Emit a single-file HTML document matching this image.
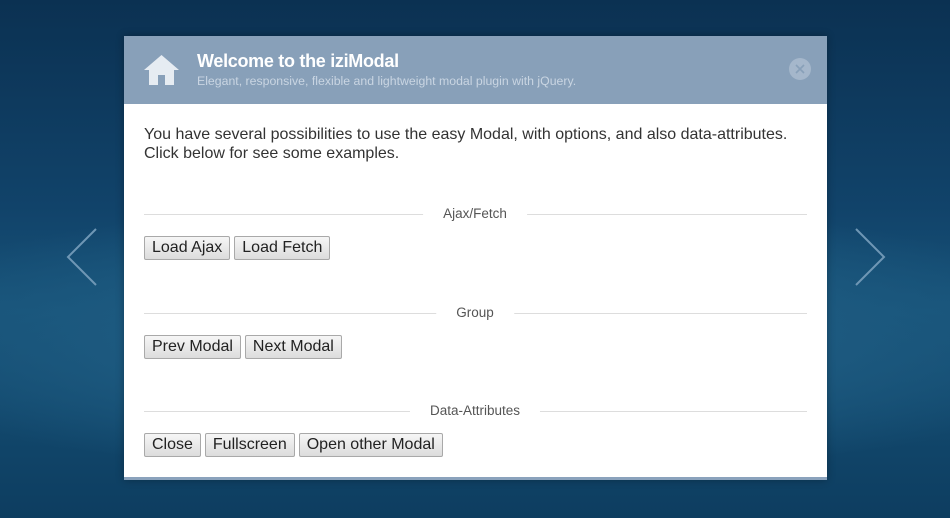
<!DOCTYPE html>
<html><head><style>
body{margin:0;width:950px;height:518px;overflow:hidden;position:relative;font-family:"Liberation Sans",Arial,sans-serif;
background:radial-gradient(ellipse 650px 140px at 475px 340px,#3a7ba0 0%,#1d5a80 50%,transparent 100%),linear-gradient(180deg,#0b3152 0%,#11436a 40%,#175379 60%,#0d3d60 100%);}
.arrow{position:absolute;top:228px;width:40px;height:58px}
.modal{position:absolute;left:124px;top:36px;width:703px;height:441px;background:#fff;border-bottom:3px solid #8aa2bc;box-shadow:0 0 8px rgba(0,0,0,.3)}
.hd{height:68px;background:#88a0b9;position:relative}
.hd h1{position:absolute;left:73px;top:15px;margin:0;font-size:18px;font-weight:bold;color:#fff;letter-spacing:-.3px}
.hd p{position:absolute;left:73px;top:38px;margin:0;font-size:12.3px;color:#c9d5e2}
.close{position:absolute;left:665px;top:22px;width:22px;height:22px;border-radius:50%;background:#a5b7cb}
.intro{position:absolute;left:20px;top:89px;font-size:16px;color:#333;line-height:19px}
.sep{position:absolute;left:20px;width:663px;height:1px;background:#ddd}
.lbl{position:absolute;background:#fff;padding:0 20px;font-size:13.5px;color:#555;transform:translateX(-50%);line-height:14px}
.row{position:absolute;left:20px;display:flex;gap:4px}
button{font-family:"Liberation Sans",Arial,sans-serif;font-size:16px;color:#222;background:linear-gradient(#f6f6f6,#dcdcdc);border:1px solid #a9a9a9;border-radius:2px;height:24px;padding:0 7px;margin:0}
</style></head><body>
<svg class="arrow" style="left:66px" viewBox="0 0 40 58"><path d="M30 1 L2 29 L30 57" fill="none" stroke="#6f97b5" stroke-width="2"/></svg>
<svg class="arrow" style="left:848px" viewBox="0 0 40 58"><path d="M8 1 L36 29 L8 57" fill="none" stroke="#6f97b5" stroke-width="2"/></svg>
<div class="modal">
<div class="hd">
<svg style="position:absolute;left:20px;top:19px" width="35" height="30" viewBox="0 0 35 30"><path d="M17.5 0 L35 15 L30 15 L30 30 L21 30 L21 20 L14 20 L14 30 L5 30 L5 15 L0 15 Z" fill="#e6ecf2"/></svg>
<h1>Welcome to the iziModal</h1>
<p>Elegant, responsive, flexible and lightweight modal plugin with jQuery.</p>
<div class="close"><svg width="22" height="22"><path d="M7 7L15 15M15 7L7 15" stroke="#88a0b9" stroke-width="1.6"/></svg></div>
</div>
<div class="intro">You have several possibilities to use the easy Modal, with options, and also data-attributes.<br>Click below for see some examples.</div>
<div class="sep" style="top:178px"></div><div class="lbl" style="left:351px;top:171px">Ajax/Fetch</div>
<div class="row" style="top:200px"><button>Load Ajax</button><button>Load Fetch</button></div>
<div class="sep" style="top:277px"></div><div class="lbl" style="left:351px;top:270px">Group</div>
<div class="row" style="top:299px"><button>Prev Modal</button><button>Next Modal</button></div>
<div class="sep" style="top:375px"></div><div class="lbl" style="left:351px;top:368px">Data-Attributes</div>
<div class="row" style="top:397px"><button>Close</button><button>Fullscreen</button><button>Open other Modal</button></div>
</div>
</body></html>
